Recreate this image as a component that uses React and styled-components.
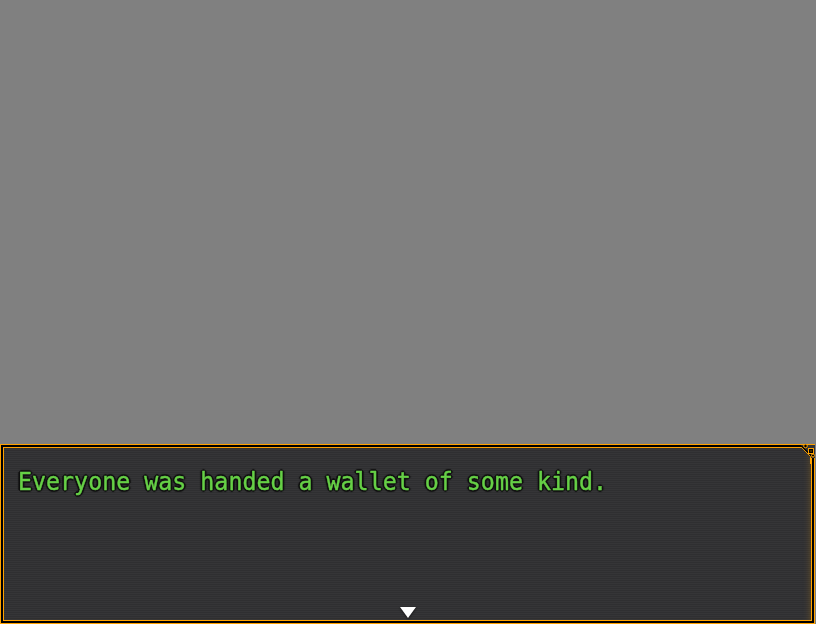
import React from "react";
import styled, { createGlobalStyle } from "styled-components";

const GlobalStyle = createGlobalStyle`
  html, body {
    margin: 0;
    padding: 0;
    background: #808080;
    overflow: hidden;
  }
`;

const Screen = styled.div`
  width: 816px;
  height: 624px;
  display: flex;
  flex-direction: column;
  background: #808080;
`;

const Stage = styled.div`
  flex: 1;
`;

const MessageWindow = styled.div`
  position: relative;
  box-sizing: border-box;
  width: 815px;
  height: 180px;
  border: 1px solid #ffa200;
  box-shadow: inset 0 0 0 2px #000, inset 0 0 0 3px #ffa200,
    inset -6px 0 8px -4px rgba(255, 162, 0, 0.35);
  background-color: #333335;
  background-image: repeating-linear-gradient(
    to bottom,
    #353537 0px,
    #353537 1px,
    #2f2f31 1px,
    #2f2f31 2px
  );
  padding: 21px 16px 0 17px;
`;

const MessageText = styled.p`
  margin: 0;
  font-family: "DejaVu Sans Mono", "Liberation Mono", monospace;
  font-size: 23.3px;
  line-height: 30px;
  color: #66d046;
  -webkit-text-stroke: 0.4px #66d046;
  transform: scaleY(1.06);
  transform-origin: left top;
  text-shadow: -1px -1px 0 #111, 1px -1px 0 #111, -1px 1px 0 #111,
    1px 1px 0 #111, 0 2px 1px #111, 2px 0 1px #111, 0 -2px 1px #111,
    -2px 0 1px #111;
`;

const Corner = styled.svg`
  position: absolute;
  top: -1px;
  right: -1px;
`;

const NextArrow = styled.svg`
  position: absolute;
  left: 50%;
  bottom: 4px;
  transform: translateX(-50%);
  filter: drop-shadow(0 1px 1px rgba(0, 0, 0, 0.6));
`;

export default function App() {
  return (
    <>
      <GlobalStyle />
      <Screen>
        <Stage />
        <MessageWindow>
          <MessageText>Everyone was handed a wallet of some kind.</MessageText>
          <Corner width="20" height="20" viewBox="0 0 20 20">
            <polygon points="6,1 20,1 20,14 15,14" fill="#333335" />
            <path d="M5.5 3.5H6.5L15.5 12.5V20" stroke="#ffa200" strokeWidth="1" fill="none" />
            <path d="M7 2.5L16.5 12" stroke="#000" strokeWidth="1.2" fill="none" />
            <circle cx="10.5" cy="2" r="1.8" fill="#000" stroke="#ffa200" strokeWidth="1" />
            <rect x="13.5" y="4.5" width="5" height="5" fill="#000" stroke="#ffa200" strokeWidth="1" />
            <rect x="15.5" y="6.5" width="1" height="1" fill="#ffa200" />
            <circle cx="18" cy="11.5" r="1.5" fill="#000" stroke="#ffa200" strokeWidth="1" />
          </Corner>
          <NextArrow width="18" height="13" viewBox="0 0 18 13">
            <path d="M1 1H17L9 12Z" fill="#fff" />
          </NextArrow>
        </MessageWindow>
      </Screen>
    </>
  );
}
